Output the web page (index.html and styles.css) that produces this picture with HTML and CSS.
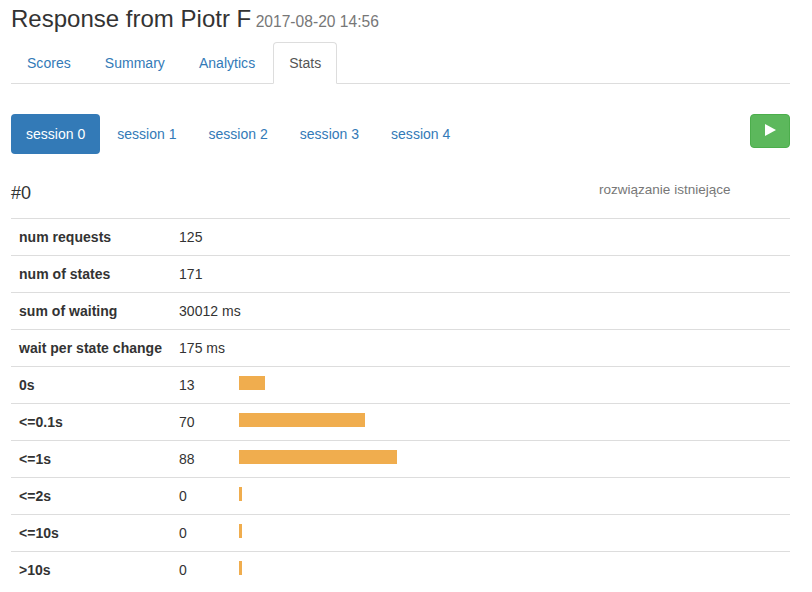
FILE: index.html
```html
<!DOCTYPE html>
<html lang="pl">
<head>
<meta charset="utf-8">
<title>Response from Piotr F</title>
<link rel="stylesheet" href="styles.css">
</head>
<body>
<main class="page">
  <h3 class="title">Response from Piotr F<small> 2017-08-20 14:56</small></h3>
  <ul class="tabs">
    <li><a href="#">Scores</a></li>
    <li><a href="#">Summary</a></li>
    <li><a href="#">Analytics</a></li>
    <li class="active"><a href="#">Stats</a></li>
  </ul>
  <div class="session-bar">
    <ul class="pills">
      <li class="active"><a href="#">session 0</a></li>
      <li><a href="#">session 1</a></li>
      <li><a href="#">session 2</a></li>
      <li><a href="#">session 3</a></li>
      <li><a href="#">session 4</a></li>
    </ul>
    <button class="play" type="button" aria-label="play">
      <svg class="play-icon" width="11" height="12" viewBox="0 0 11 12"><path d="M0 0 L11 6 L0 12 Z" fill="#fff"/></svg>
    </button>
  </div>
  <div class="heading-row">
    <h4 class="session-id">#0</h4>
    <span class="status">rozwiązanie istniejące</span>
  </div>
  <table class="stats">
    <tbody>
      <tr><th>num requests</th><td>125</td></tr>
      <tr><th>num of states</th><td>171</td></tr>
      <tr><th>sum of waiting</th><td>30012 ms</td></tr>
      <tr><th>wait per state change</th><td>175 ms</td></tr>
      <tr><th>0s</th><td><span class="count">13</span><span class="bar" style="width:26px"></span></td></tr>
      <tr><th>&lt;=0.1s</th><td><span class="count">70</span><span class="bar" style="width:126px"></span></td></tr>
      <tr><th>&lt;=1s</th><td><span class="count">88</span><span class="bar" style="width:158px"></span></td></tr>
      <tr><th>&lt;=2s</th><td><span class="count">0</span><span class="bar" style="width:3px"></span></td></tr>
      <tr><th>&lt;=10s</th><td><span class="count">0</span><span class="bar" style="width:3px"></span></td></tr>
      <tr><th>&gt;10s</th><td><span class="count">0</span><span class="bar" style="width:3px"></span></td></tr>
    </tbody>
  </table>
</main>
</body>
</html>
```
FILE: styles.css
```css
* { box-sizing: border-box; }
html, body { margin: 0; padding: 0; background: #fff; }
body {
  font-family: "Liberation Sans", Arial, sans-serif;
  font-size: 14px;
  line-height: 20px;
  color: #333;
  letter-spacing: 0.03px;
}
a { text-decoration: none; color: #337ab7; }
ul { list-style: none; margin: 0; padding: 0; }

.page { padding: 0 22px 0 11px; }

.title {
  margin: 0;
  padding-top: 6px;
  height: 42px;
  font-size: 24px;
  line-height: 26px;
  font-weight: 500;
  letter-spacing: 0.01px;
}
.title small { font-size: 65%; font-weight: 400; color: #777; line-height: 1; }

.tabs { display: flex; border-bottom: 1px solid #ddd; height: 42px; }
.tabs li { margin-right: 2px; height: 42px; }
.tabs a {
  display: block;
  height: 42px;
  padding: 10px 15px;
  border: 1px solid transparent;
  border-radius: 4px 4px 0 0;
  line-height: 20px;
}
.tabs .active a {
  color: #555;
  background: #fff;
  border-color: #ddd #ddd #fff;
}

.session-bar {
  display: flex;
  justify-content: space-between;
  align-items: flex-start;
  margin-top: 30px;
}
.pills { display: flex; letter-spacing: 0.012px; }
.pills li { margin-right: 2px; }
.pills a { display: block; padding: 10px 15px; border-radius: 4px; }
.pills .active a { color: #fff; background: #337ab7; }

.play {
  display: flex;
  align-items: center;
  justify-content: center;
  width: 40px;
  height: 34px;
  padding: 0 0 2px 1px;
  background: #5cb85c;
  border: 1px solid #4cae4c;
  border-radius: 4px;
}
.play-icon { display: block; }

.heading-row { display: flex; height: 64px; }
.session-id {
  margin: 29px 0 0;
  font-size: 18px;
  line-height: 20px;
  font-weight: 500;
}
.status {
  margin: 26px 0 0 568px;
  font-size: 13.5px;
  line-height: 20px;
  color: #777;
  letter-spacing: 0;
}

.stats { width: 100%; border-collapse: collapse; border-spacing: 0; }
.stats th, .stats td {
  padding: 8px;
  border-top: 1px solid #ddd;
  line-height: 20px;
  vertical-align: top;
  text-align: left;
}
.stats th { width: 160px; font-weight: 700; white-space: nowrap; }
.count { display: inline-block; width: 60px; }
.bar { display: inline-block; height: 14px; background: #f0ad4e; }
```
